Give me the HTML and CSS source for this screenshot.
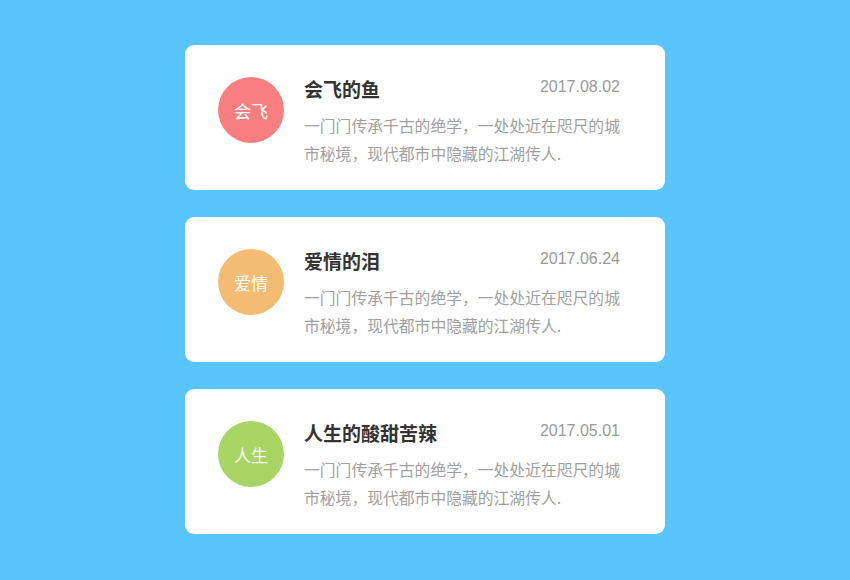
FILE: index.html
```html
<!DOCTYPE html>
<html lang="zh">
<head>
<meta charset="utf-8">
<title>列表</title>
<link rel="stylesheet" href="styles.css">
</head>
<body>
<main class="list">
  <article class="card">
    <div class="avatar avatar-red">会飞</div>
    <div class="content">
      <div class="head">
        <h2 class="title">会飞的鱼</h2>
        <span class="date">2017.08.02</span>
      </div>
      <p class="desc">一门门传承千古的绝学，一处处近在咫尺的城市秘境，现代都市中隐藏的江湖传人.</p>
    </div>
  </article>
  <article class="card">
    <div class="avatar avatar-orange">爱情</div>
    <div class="content">
      <div class="head">
        <h2 class="title">爱情的泪</h2>
        <span class="date">2017.06.24</span>
      </div>
      <p class="desc">一门门传承千古的绝学，一处处近在咫尺的城市秘境，现代都市中隐藏的江湖传人.</p>
    </div>
  </article>
  <article class="card">
    <div class="avatar avatar-green">人生</div>
    <div class="content">
      <div class="head">
        <h2 class="title">人生的酸甜苦辣</h2>
        <span class="date">2017.05.01</span>
      </div>
      <p class="desc">一门门传承千古的绝学，一处处近在咫尺的城市秘境，现代都市中隐藏的江湖传人.</p>
    </div>
  </article>
</main>
</body>
</html>
```
FILE: styles.css
```css
html, body {
  margin: 0;
  padding: 0;
}
body {
  background: #5ac5fd;
  width: 850px;
  height: 580px;
  overflow: hidden;
  font-family: "Noto Sans CJK SC", "Liberation Sans", sans-serif;
}
.list {
  display: flex;
  flex-direction: column;
  align-items: center;
  gap: 27px;
  padding-top: 45px;
}
.card {
  box-sizing: border-box;
  width: 480px;
  height: 145px;
  background: #fff;
  border-radius: 9px;
  display: flex;
  align-items: flex-start;
  padding: 31px 45px 0 33px;
}
.avatar {
  flex: none;
  width: 66px;
  height: 66px;
  border-radius: 50%;
  margin-top: 1px;
  margin-right: 20px;
  display: flex;
  align-items: center;
  justify-content: center;
  color: #fff;
  font-size: 17px;
}
.avatar-red { background: #f87e80; }
.avatar-orange { background: #f4bc72; }
.avatar-green { background: #a7d563; }
.content {
  flex: 1;
  min-width: 0;
}
.head {
  display: flex;
  align-items: center;
  justify-content: space-between;
  height: 26px;
}
.title {
  margin: 0;
  font-size: 19px;
  font-weight: bold;
  color: #333;
  line-height: 26px;
}
.date {
  font-family: "Liberation Sans", "Noto Sans", sans-serif;
  font-size: 16px;
  color: #999;
  margin-top: -5px;
}
.desc {
  margin: 10px 0 0;
  font-size: 15.8px;
  line-height: 28px;
  color: #a0a0a0;
}
```
